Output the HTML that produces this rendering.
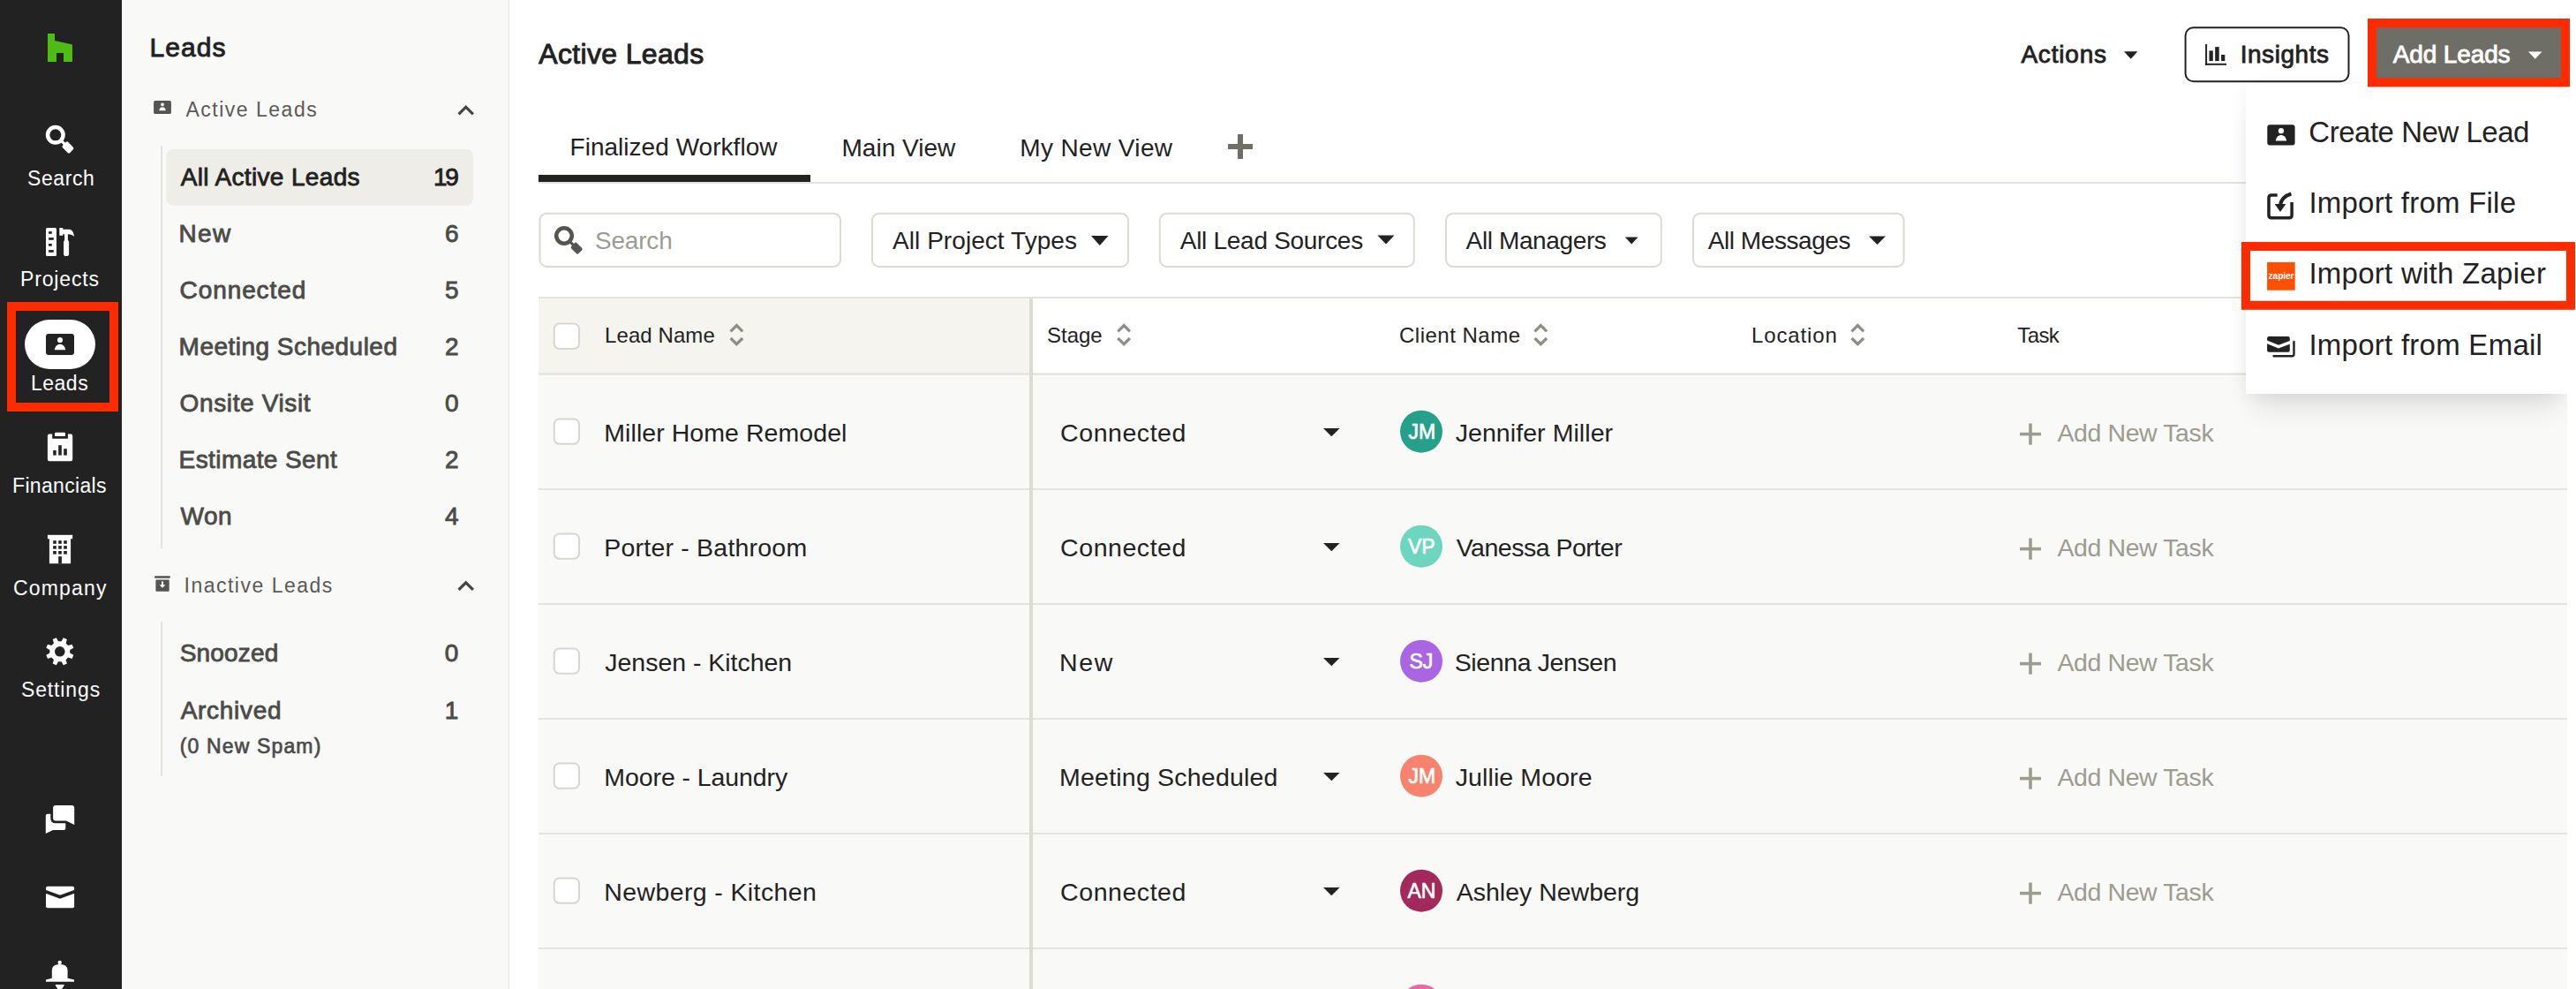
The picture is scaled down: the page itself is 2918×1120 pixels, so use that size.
<!DOCTYPE html>
<html><head><meta charset="utf-8"><style>
html,body{margin:0;padding:0}
body{width:2918px;height:1120px;overflow:hidden;position:relative;background:#fff;font-family:'Liberation Sans',sans-serif}
.t{position:absolute;white-space:nowrap;line-height:1;font-family:'Liberation Sans',sans-serif}
svg{position:absolute;left:0;top:0}
#menu{position:absolute;left:2544px;top:95px;width:364px;height:351px;background:#fff;box-shadow:0 24px 30px -10px rgba(0,0,0,0.11),0 2px 18px rgba(0,0,0,0.05)}
#menuc{position:absolute;left:0;top:0;width:2918px;height:1120px}
</style></head><body>
<svg width="2918" height="1120" viewBox="0 0 2918 1120"><rect x="0" y="0" width="138" height="1120" fill="#222222"/><rect x="138" y="0" width="438" height="1120" fill="#f9f9f7"/><rect x="576" y="0" width="1" height="1120" fill="#e6e5df"/><path d="M54 38H62V46L82 50.6V70H72V60H64V70H54Z" fill="#4dbc15"/><g transform="translate(0 0)" fill="#ffffff"><circle cx="62.8" cy="152.8" r="8.75" fill="none" stroke="#ffffff" stroke-width="4.5"/><g transform="translate(62.8 152.8) rotate(45)"><rect x="10" y="-1.6" width="5" height="3.2"/><rect x="14.2" y="-4.4" width="11.6" height="8.8" rx="1.8"/></g></g><g fill="#ffffff"><rect x="52" y="258" width="12" height="32" rx="1.5"/><rect x="73.1" y="264" width="3.8" height="9"/><rect x="72.1" y="271.7" width="6" height="18.3" rx="2.6"/><path d="M67.3 258H71.3V259.8H78.5C81.8 259.8 83.6 263.5 84 267.7C82.3 266.3 80.2 265.2 77.5 265.2H71.3V266.7H67.3Z"/></g><g fill="#222222"><rect x="55.1" y="262.1" width="3.7" height="2.7"/><rect x="55.1" y="269.1" width="5.7" height="2.7"/><rect x="55.1" y="276" width="3.7" height="2.7"/><rect x="55.1" y="283.1" width="5.7" height="2.7"/></g><rect x="28" y="362" width="80" height="56" rx="28" fill="#ffffff"/><rect x="52" y="378" width="32" height="24" rx="3.0" fill="#222222"/><circle cx="68.0" cy="385.0" r="3.1" fill="#ffffff"/><path d="M61.8 396.2C62.5 392.0 65.0 389.8 68.0 389.8C71.0 389.8 73.5 392.0 74.2 396.2Z" fill="#ffffff"/><path d="M55.9 491.4H59.2V496.7H76.9V491.4H80.2Q82.2 491.4 82.2 493.4V520.2Q82.2 522.2 80.2 522.2H55.9Q53.9 522.2 53.9 520.2V493.4Q53.9 491.4 55.9 491.4Z" fill="#fff"/><rect x="62" y="489.8" width="12" height="4.3" rx="1" fill="#fff"/><g fill="#222222"><rect x="60.2" y="510" width="3.5" height="5.6"/><rect x="66.2" y="504.2" width="3.6" height="11.4"/><rect x="72.2" y="508.2" width="3.6" height="7.4"/></g><g fill="#fff"><rect x="53.9" y="605.8" width="28.3" height="4.4"/><rect x="55.9" y="610" width="24.2" height="28.2"/></g><g fill="#222222"><rect x="60.2" y="612.2" width="3.6" height="3.6"/><rect x="60.2" y="618.1" width="3.6" height="3.6"/><rect x="60.2" y="624" width="3.6" height="3.6"/><rect x="66.2" y="612.2" width="3.6" height="3.6"/><rect x="66.2" y="618.1" width="3.6" height="3.6"/><rect x="66.2" y="624" width="3.6" height="3.6"/><rect x="72.2" y="612.2" width="3.6" height="3.6"/><rect x="72.2" y="618.1" width="3.6" height="3.6"/><rect x="72.2" y="624" width="3.6" height="3.6"/><rect x="66.2" y="630.1" width="3.7" height="8.2"/></g><path d="M69.61 726.34 L71.81 722.31 L75.92 724.01 L74.62 728.42 L77.18 730.98 L81.59 729.68 L83.29 733.79 L79.26 735.99 L79.26 739.61 L83.29 741.81 L81.59 745.92 L77.18 744.62 L74.62 747.18 L75.92 751.59 L71.81 753.29 L69.61 749.26 L65.99 749.26 L63.79 753.29 L59.68 751.59 L60.98 747.18 L58.42 744.62 L54.01 745.92 L52.31 741.81 L56.34 739.61 L56.34 735.99 L52.31 733.79 L54.01 729.68 L58.42 730.98 L60.98 728.42 L59.68 724.01 L63.79 722.31 L65.99 726.34Z M73.6 737.8 A5.8 5.8 0 1 0 62.0 737.8 A5.8 5.8 0 1 0 73.6 737.8Z" fill="#fff" fill-rule="evenodd"/><path d="M53.8 921.7H72.3Q74.3 921.7 74.3 923.7V937.9Q74.3 939.9 72.3 939.9H60L51.8 944V923.7Q51.8 921.7 53.8 921.7Z" fill="#fff"/><path d="M63 911.9H81.2Q84.2 911.9 84.2 914.9V933.9L75 929.5H63Q60.1 929.5 60.1 926.5V914.9Q60.1 911.9 63 911.9Z" fill="#222222" stroke="#222222" stroke-width="5.6" stroke-linejoin="round"/><path d="M63 911.9H81.2Q84.2 911.9 84.2 914.9V933.9L75 929.5H63Q60.1 929.5 60.1 926.5V914.9Q60.1 911.9 63 911.9Z" fill="#fff"/><rect x="52" y="1003.8" width="32.1" height="24.4" rx="2" fill="#fff"/><path d="M51 1009.5L68 1015.8L85 1009.5" stroke="#222222" stroke-width="3.6" fill="none"/><circle cx="67.7" cy="1090" r="2.2" fill="#fff"/><path d="M58.8 1107.8V1099Q58.8 1092 67.7 1092Q76.6 1092 76.6 1099V1107.8L84 1109.4V1111.7H52V1109.4Z" fill="#fff"/><path d="M62.5 1115H73Q70.5 1121 67.7 1121Q65 1121 62.5 1115Z" fill="#fff"/><rect x="188.4" y="168.8" width="347.6" height="64" rx="8" fill="#eeede8"/><rect x="182" y="165" width="2" height="456" fill="#e3e2dc"/><rect x="182" y="704" width="2" height="175" fill="#e3e2dc"/><rect x="174.1" y="114" width="19.8" height="15" rx="1.8599999999999999" fill="#555550"/><circle cx="184.0" cy="118.34" r="1.922" fill="#f9f9f7"/><path d="M180.156 125.28399999999999C180.59 122.68 182.14 121.316 184.0 121.316C185.86 121.316 187.41 122.68 187.844 125.28399999999999Z" fill="#f9f9f7"/><path d="M519.6 129.3L527.7 121.2L535.9 129.3" stroke="#454541" stroke-width="3.2" fill="none"/><path d="M519.6 667.9L527.7 659.8L535.9 667.9" stroke="#454541" stroke-width="3.2" fill="none"/><g fill="#555550"><rect x="175" y="652.2" width="17.9" height="2.6" rx="1.2"/><rect x="176.4" y="656.4" width="15.3" height="13.4" rx="1"/></g><g fill="#f9f9f7"><rect x="183" y="658.4" width="2" height="4.6"/><path d="M180.6 662.2H187.4L184 665.8Z"/></g><rect x="610" y="206" width="2298" height="2" fill="#e4e3dc"/><rect x="610" y="198" width="308" height="8" fill="#222222"/><g fill="#6f6f67"><rect x="1391" y="163" width="28" height="6"/><rect x="1402" y="152" width="6" height="28"/></g><rect x="611.5" y="241.7" width="340.5" height="60.30000000000001" rx="8" fill="#fff" stroke="#dcdbd2" stroke-width="2"/><g transform="translate(576.2 114.2)" fill="#555550"><circle cx="62.8" cy="152.8" r="8.75" fill="none" stroke="#555550" stroke-width="4.5"/><g transform="translate(62.8 152.8) rotate(45)"><rect x="10" y="-1.6" width="5" height="3.2"/><rect x="14.2" y="-4.4" width="11.6" height="8.8" rx="1.8"/></g></g><rect x="987.9" y="241.7" width="290.1" height="60.30000000000001" rx="8" fill="#fff" stroke="#dcdbd2" stroke-width="2"/><rect x="1313.8" y="241.7" width="288.0" height="60.30000000000001" rx="8" fill="#fff" stroke="#dcdbd2" stroke-width="2"/><rect x="1638" y="241.7" width="243.79999999999995" height="60.30000000000001" rx="8" fill="#fff" stroke="#dcdbd2" stroke-width="2"/><rect x="1918" y="241.7" width="238.5999999999999" height="60.30000000000001" rx="8" fill="#fff" stroke="#dcdbd2" stroke-width="2"/><g fill="#222222"><path d="M1236 267H1255.5L1245.75 278Z"/><path d="M1560.4 266.6H1579.5L1570 276.6Z"/><path d="M1840.8 268.4H1855.5L1848.2 276.6Z"/><path d="M2117 267.5H2136L2126.5 277Z"/><path d="M2406 58.3H2421.4L2413.7 66.7Z"/></g><rect x="610" y="424" width="2298" height="696" fill="#f9f9f7"/><rect x="610" y="338" width="556" height="85" fill="#f5f4ef"/><rect x="610" y="336" width="2298" height="2" fill="#e4e3dc"/><rect x="610" y="422.5" width="2298" height="2" fill="#e2e1d9"/><rect x="610" y="553" width="2298" height="2" fill="#e4e3dc"/><rect x="610" y="683" width="2298" height="2" fill="#e4e3dc"/><rect x="610" y="813" width="2298" height="2" fill="#e4e3dc"/><rect x="610" y="943" width="2298" height="2" fill="#e4e3dc"/><rect x="610" y="1073" width="2298" height="2" fill="#e4e3dc"/><rect x="1166" y="338" width="4" height="782" fill="#dddcd3"/><rect x="627.7" y="366.6" width="28.3" height="28.4" rx="6" fill="#fff" stroke="#d8d7cf" stroke-width="2"/><rect x="627.7" y="474.4" width="28.3" height="28.4" rx="6" fill="#fff" stroke="#d8d7cf" stroke-width="2"/><rect x="627.7" y="604.4" width="28.3" height="28.4" rx="6" fill="#fff" stroke="#d8d7cf" stroke-width="2"/><rect x="627.7" y="734.4" width="28.3" height="28.4" rx="6" fill="#fff" stroke="#d8d7cf" stroke-width="2"/><rect x="627.7" y="864.4" width="28.3" height="28.4" rx="6" fill="#fff" stroke="#d8d7cf" stroke-width="2"/><rect x="627.7" y="994.4" width="28.3" height="28.4" rx="6" fill="#fff" stroke="#d8d7cf" stroke-width="2"/><g transform="translate(0.0 0)" stroke="#8f8e83" stroke-width="3.2" fill="none"><path d="M827.6 375.3L834.4 368.6L841.2 375.3"/><path d="M827.6 383L834.4 389.7L841.2 383"/></g><g transform="translate(438.7 0)" stroke="#8f8e83" stroke-width="3.2" fill="none"><path d="M827.6 375.3L834.4 368.6L841.2 375.3"/><path d="M827.6 383L834.4 389.7L841.2 383"/></g><g transform="translate(910.9 0)" stroke="#8f8e83" stroke-width="3.2" fill="none"><path d="M827.6 375.3L834.4 368.6L841.2 375.3"/><path d="M827.6 383L834.4 389.7L841.2 383"/></g><g transform="translate(1269.9 0)" stroke="#8f8e83" stroke-width="3.2" fill="none"><path d="M827.6 375.3L834.4 368.6L841.2 375.3"/><path d="M827.6 383L834.4 389.7L841.2 383"/></g><path d="M1499 485H1517.6L1508.3 494.3Z" fill="#222222"/><circle cx="1610" cy="488.7" r="24" fill="#26a08b"/><g fill="#9d9c8f"><rect x="2288" y="489.8" width="24" height="3.6"/><rect x="2298.2" y="479.5" width="3.6" height="24.2"/></g><path d="M1499 615H1517.6L1508.3 624.3Z" fill="#222222"/><circle cx="1610" cy="618.7" r="24" fill="#6dd6be"/><g fill="#9d9c8f"><rect x="2288" y="619.8" width="24" height="3.6"/><rect x="2298.2" y="609.5" width="3.6" height="24.2"/></g><path d="M1499 745H1517.6L1508.3 754.3Z" fill="#222222"/><circle cx="1610" cy="748.7" r="24" fill="#a965e2"/><g fill="#9d9c8f"><rect x="2288" y="749.8" width="24" height="3.6"/><rect x="2298.2" y="739.5" width="3.6" height="24.2"/></g><path d="M1499 875H1517.6L1508.3 884.3Z" fill="#222222"/><circle cx="1610" cy="878.7" r="24" fill="#f5836d"/><g fill="#9d9c8f"><rect x="2288" y="879.8" width="24" height="3.6"/><rect x="2298.2" y="869.5" width="3.6" height="24.2"/></g><path d="M1499 1005H1517.6L1508.3 1014.3Z" fill="#222222"/><circle cx="1610" cy="1008.7" r="24" fill="#a3285b"/><g fill="#9d9c8f"><rect x="2288" y="1009.8" width="24" height="3.6"/><rect x="2298.2" y="999.5" width="3.6" height="24.2"/></g><circle cx="1610" cy="1138.7" r="24" fill="#e96aa8"/><rect x="2475.6" y="31.2" width="184.9" height="61.1" rx="9" fill="#fff" stroke="#222222" stroke-width="2"/><g fill="#222222"><rect x="2498.1" y="50.1" width="2" height="23.7"/><rect x="2498" y="71.8" width="24" height="2"/><rect x="2502.5" y="57.4" width="4.3" height="11.7"/><rect x="2509.2" y="53.1" width="4.5" height="16"/><rect x="2516.1" y="62" width="4.2" height="7.1"/></g><rect x="2682" y="21" width="229" height="77" fill="#6f6e66"/><path d="M2864 58.5H2879.5L2871.75 66.8Z" fill="#fff"/></svg>
<span class=t style="left:31.0px;top:191.0px;font-size:23px;font-weight:400;color:#ffffff;letter-spacing:0.60px">Search</span><span class=t style="left:23.0px;top:305.0px;font-size:23px;font-weight:400;color:#ffffff;letter-spacing:0.86px">Projects</span><span class=t style="left:35.0px;top:423.0px;font-size:23px;font-weight:400;color:#ffffff;letter-spacing:0.50px">Leads</span><span class=t style="left:14.0px;top:539.0px;font-size:23px;font-weight:400;color:#ffffff;letter-spacing:0.33px">Financials</span><span class=t style="left:15.0px;top:655.0px;font-size:23px;font-weight:400;color:#ffffff;letter-spacing:1.17px">Company</span><span class=t style="left:24.0px;top:770.0px;font-size:23px;font-weight:400;color:#ffffff;letter-spacing:0.86px">Settings</span><span class=t style="left:169.4px;top:38.7px;font-size:30px;font-weight:400;color:#222222;letter-spacing:1.07px;-webkit-text-stroke:0.9px #222222">Leads</span><span class=t style="left:210.5px;top:113.0px;font-size:23px;font-weight:400;color:#5b5b56;letter-spacing:1.50px">Active Leads</span><span class=t style="left:208.5px;top:652.0px;font-size:23px;font-weight:400;color:#5b5b56;letter-spacing:1.50px">Inactive Leads</span><span class=t style="left:204.7px;top:186.7px;font-size:28px;font-weight:400;color:#222222;letter-spacing:0.35px;-webkit-text-stroke:0.84px #222222">All Active Leads</span><span class=t style="left:491.0px;top:186.7px;font-size:28px;font-weight:400;color:#222222;letter-spacing:-2.40px;-webkit-text-stroke:0.84px #222222">19</span><span class=t style="left:202.6px;top:251.3px;font-size:28px;font-weight:400;color:#4b4b47;letter-spacing:1.30px;-webkit-text-stroke:0.84px #4b4b47">New</span><span class=t style="left:504.0px;top:251.3px;font-size:28px;font-weight:400;color:#4b4b47;-webkit-text-stroke:0.84px #4b4b47">6</span><span class=t style="left:203.6px;top:315.3px;font-size:28px;font-weight:400;color:#4b4b47;letter-spacing:0.90px;-webkit-text-stroke:0.84px #4b4b47">Connected</span><span class=t style="left:504.0px;top:315.3px;font-size:28px;font-weight:400;color:#4b4b47;-webkit-text-stroke:0.84px #4b4b47">5</span><span class=t style="left:202.6px;top:379.3px;font-size:28px;font-weight:400;color:#4b4b47;letter-spacing:0.48px;-webkit-text-stroke:0.84px #4b4b47">Meeting Scheduled</span><span class=t style="left:504.0px;top:379.3px;font-size:28px;font-weight:400;color:#4b4b47;-webkit-text-stroke:0.84px #4b4b47">2</span><span class=t style="left:203.6px;top:443.3px;font-size:28px;font-weight:400;color:#4b4b47;letter-spacing:0.62px;-webkit-text-stroke:0.84px #4b4b47">Onsite Visit</span><span class=t style="left:504.0px;top:443.3px;font-size:28px;font-weight:400;color:#4b4b47;-webkit-text-stroke:0.84px #4b4b47">0</span><span class=t style="left:202.6px;top:507.3px;font-size:28px;font-weight:400;color:#4b4b47;letter-spacing:0.41px;-webkit-text-stroke:0.84px #4b4b47">Estimate Sent</span><span class=t style="left:504.0px;top:507.3px;font-size:28px;font-weight:400;color:#4b4b47;-webkit-text-stroke:0.84px #4b4b47">2</span><span class=t style="left:204.6px;top:571.3px;font-size:28px;font-weight:400;color:#4b4b47;letter-spacing:0.45px;-webkit-text-stroke:0.84px #4b4b47">Won</span><span class=t style="left:504.0px;top:571.3px;font-size:28px;font-weight:400;color:#4b4b47;-webkit-text-stroke:0.84px #4b4b47">4</span><span class=t style="left:203.7px;top:726.0px;font-size:28px;font-weight:400;color:#4b4b47;letter-spacing:0.17px;-webkit-text-stroke:0.84px #4b4b47">Snoozed</span><span class=t style="left:503.7px;top:726.0px;font-size:28px;font-weight:400;color:#4b4b47;-webkit-text-stroke:0.84px #4b4b47">0</span><span class=t style="left:204.7px;top:790.5px;font-size:28px;font-weight:400;color:#4b4b47;letter-spacing:0.71px;-webkit-text-stroke:0.84px #4b4b47">Archived</span><span class=t style="left:503.7px;top:790.5px;font-size:28px;font-weight:400;color:#4b4b47;-webkit-text-stroke:0.84px #4b4b47">1</span><span class=t style="left:203.7px;top:833.6px;font-size:23px;font-weight:400;color:#4b4b47;letter-spacing:1.15px;-webkit-text-stroke:0.69px #4b4b47">(0 New Spam)</span><span class=t style="left:610.3px;top:45.0px;font-size:32px;font-weight:400;color:#222222;letter-spacing:0.34px;-webkit-text-stroke:0.96px #222222">Active Leads</span><span class=t style="left:2289.4px;top:48.0px;font-size:28px;font-weight:400;color:#222222;letter-spacing:0.80px;-webkit-text-stroke:0.84px #222222">Actions</span><span class=t style="left:2537.7px;top:48.4px;font-size:28px;font-weight:400;color:#222222;letter-spacing:0.54px;-webkit-text-stroke:0.84px #222222">Insights</span><span class=t style="left:2710.8px;top:48.2px;font-size:28px;font-weight:400;color:#ffffff;letter-spacing:-0.14px;-webkit-text-stroke:0.84px #ffffff">Add Leads</span><span class=t style="left:645.5px;top:153.4px;font-size:28px;font-weight:400;color:#222222;letter-spacing:0.03px">Finalized Workflow</span><span class=t style="left:953.5px;top:153.5px;font-size:28px;font-weight:400;color:#222222;letter-spacing:0.01px">Main View</span><span class=t style="left:1155.3px;top:153.5px;font-size:28px;font-weight:400;color:#222222;letter-spacing:0.37px">My New View</span><span class=t style="left:674.0px;top:259.0px;font-size:28px;font-weight:400;color:#9d9c91;letter-spacing:-0.20px">Search</span><span class=t style="left:1011.0px;top:259.3px;font-size:28px;font-weight:400;color:#222222;letter-spacing:0.06px">All Project Types</span><span class=t style="left:1336.8px;top:259.3px;font-size:28px;font-weight:400;color:#222222;letter-spacing:-0.29px">All Lead Sources</span><span class=t style="left:1660.6px;top:259.3px;font-size:28px;font-weight:400;color:#222222;letter-spacing:-0.38px">All Managers</span><span class=t style="left:1934.7px;top:259.3px;font-size:28px;font-weight:400;color:#222222;letter-spacing:-0.43px">All Messages</span><span class=t style="left:685.0px;top:368.0px;font-size:24px;font-weight:400;color:#222222;letter-spacing:0.09px">Lead Name</span><span class=t style="left:1186.0px;top:368.0px;font-size:24px;font-weight:400;color:#222222">Stage</span><span class=t style="left:1585.0px;top:368.0px;font-size:24px;font-weight:400;color:#222222;letter-spacing:0.50px">Client Name</span><span class=t style="left:1984.0px;top:368.0px;font-size:24px;font-weight:400;color:#222222;letter-spacing:0.86px">Location</span><span class=t style="left:2285.3px;top:368.0px;font-size:24px;font-weight:400;color:#222222;letter-spacing:-0.63px">Task</span><span class=t style="left:684.3px;top:475.5px;font-size:28.5px;font-weight:400;color:#222222;letter-spacing:0.06px">Miller Home Remodel</span><span class=t style="left:1201.1px;top:475.5px;font-size:28.5px;font-weight:400;color:#222222;letter-spacing:0.55px">Connected</span><span class=t style="left:1648.7px;top:475.5px;font-size:28.5px;font-weight:400;color:#222222;letter-spacing:0.07px">Jennifer Miller</span><span class=t style="left:2330.5px;top:475.5px;font-size:28.5px;font-weight:400;color:#9d9c8f;letter-spacing:-0.41px">Add New Task</span><span class=t style="left:1595.5px;top:478.0px;font-size:23px;font-weight:400;color:#ffffff;-webkit-text-stroke:0.69px #ffffff">JM</span><span class=t style="left:684.3px;top:605.5px;font-size:28.5px;font-weight:400;color:#222222;letter-spacing:0.21px">Porter - Bathroom</span><span class=t style="left:1201.1px;top:605.5px;font-size:28.5px;font-weight:400;color:#222222;letter-spacing:0.55px">Connected</span><span class=t style="left:1649.7px;top:605.5px;font-size:28.5px;font-weight:400;color:#222222;letter-spacing:-0.49px">Vanessa Porter</span><span class=t style="left:2330.5px;top:605.5px;font-size:28.5px;font-weight:400;color:#9d9c8f;letter-spacing:-0.41px">Add New Task</span><span class=t style="left:1595.0px;top:608.0px;font-size:23px;font-weight:400;color:#ffffff;-webkit-text-stroke:0.69px #ffffff">VP</span><span class=t style="left:685.3px;top:735.5px;font-size:28.5px;font-weight:400;color:#222222;letter-spacing:-0.03px">Jensen - Kitchen</span><span class=t style="left:1200.1px;top:735.5px;font-size:28.5px;font-weight:400;color:#222222;letter-spacing:1.55px">New</span><span class=t style="left:1647.7px;top:735.5px;font-size:28.5px;font-weight:400;color:#222222;letter-spacing:-0.38px">Sienna Jensen</span><span class=t style="left:2330.5px;top:735.5px;font-size:28.5px;font-weight:400;color:#9d9c8f;letter-spacing:-0.41px">Add New Task</span><span class=t style="left:1596.5px;top:738.0px;font-size:23px;font-weight:400;color:#ffffff;-webkit-text-stroke:0.69px #ffffff">SJ</span><span class=t style="left:684.3px;top:865.5px;font-size:28.5px;font-weight:400;color:#222222;letter-spacing:-0.08px">Moore - Laundry</span><span class=t style="left:1200.1px;top:865.5px;font-size:28.5px;font-weight:400;color:#222222;letter-spacing:0.21px">Meeting Scheduled</span><span class=t style="left:1648.7px;top:865.5px;font-size:28.5px;font-weight:400;color:#222222;letter-spacing:0.11px">Jullie Moore</span><span class=t style="left:2330.5px;top:865.5px;font-size:28.5px;font-weight:400;color:#9d9c8f;letter-spacing:-0.41px">Add New Task</span><span class=t style="left:1595.5px;top:868.0px;font-size:23px;font-weight:400;color:#ffffff;-webkit-text-stroke:0.69px #ffffff">JM</span><span class=t style="left:684.3px;top:995.5px;font-size:28.5px;font-weight:400;color:#222222;letter-spacing:0.38px">Newberg - Kitchen</span><span class=t style="left:1201.1px;top:995.5px;font-size:28.5px;font-weight:400;color:#222222;letter-spacing:0.55px">Connected</span><span class=t style="left:1649.7px;top:995.5px;font-size:28.5px;font-weight:400;color:#222222">Ashley Newberg</span><span class=t style="left:2330.5px;top:995.5px;font-size:28.5px;font-weight:400;color:#9d9c8f;letter-spacing:-0.41px">Add New Task</span><span class=t style="left:1594.5px;top:998.0px;font-size:23px;font-weight:400;color:#ffffff;-webkit-text-stroke:0.69px #ffffff">AN</span>
<div id="menu"></div>
<div id="menuc"><svg width="2918" height="1120" viewBox="0 0 2918 1120"><rect x="2568.3" y="141.2" width="31.3" height="23.2" rx="3.0" fill="#222222"/><circle cx="2583.9500000000003" cy="148.2" r="3.1" fill="#ffffff"/><path d="M2577.7500000000005 159.39999999999998C2578.4500000000003 155.2 2580.9500000000003 153.0 2583.9500000000003 153.0C2586.9500000000003 153.0 2589.4500000000003 155.2 2590.15 159.39999999999998Z" fill="#ffffff"/><path d="M2579.7 220.9H2573Q2570 220.9 2570 223.9V243.7Q2570 246.7 2573 246.7H2593.1Q2596.1 246.7 2596.1 243.7V229" stroke="#222222" stroke-width="3.5" fill="none"/><path d="M2595.4 219.4C2589 221.3 2583.8 225.5 2582.9 232.5" stroke="#222222" stroke-width="4.2" fill="none"/><path d="M2576.7 231H2589.3L2583 239.9Z" fill="#222222"/><rect x="2568.1" y="297" width="31.6" height="31.7" fill="#ff4f00"/><text x="2584" y="316.3" font-family="Liberation Sans" font-weight="700" font-size="10.2" fill="#fff" text-anchor="middle" letter-spacing="-0.1">zapier</text><rect x="2568.1" y="381" width="25.7" height="17.7" rx="2" fill="#222222"/><path d="M2567.5 387.2L2581 392.6L2594.3 387.6" stroke="#fff" stroke-width="3.4" fill="none"/><path d="M2598.5 387V401Q2598.5 403.25 2596.3 403.25H2575.6" stroke="#222222" stroke-width="2.4" stroke-linecap="round" fill="none"/></svg>
<span class=t style="left:2615.3px;top:133.2px;font-size:33px;font-weight:400;color:#222222;letter-spacing:-0.48px">Create New Lead</span><span class=t style="left:2615.4px;top:213.2px;font-size:33px;font-weight:400;color:#222222;letter-spacing:0.24px">Import from File</span><span class=t style="left:2615.4px;top:293.3px;font-size:33px;font-weight:400;color:#222222;letter-spacing:0.26px">Import with Zapier</span><span class=t style="left:2615.4px;top:373.5px;font-size:33px;font-weight:400;color:#222222;letter-spacing:0.26px">Import from Email</span></div>
<svg width="2918" height="1120" viewBox="0 0 2918 1120"><rect x="2908" y="95" width="10" height="1025" fill="#fff"/><g fill="none" stroke="#fe2b00" stroke-width="10"><rect x="13" y="347" width="116" height="114"/><rect x="2687" y="26.3" width="219" height="67.1"/><rect x="2544" y="279" width="368" height="66.8"/></g></svg>
</body></html>
